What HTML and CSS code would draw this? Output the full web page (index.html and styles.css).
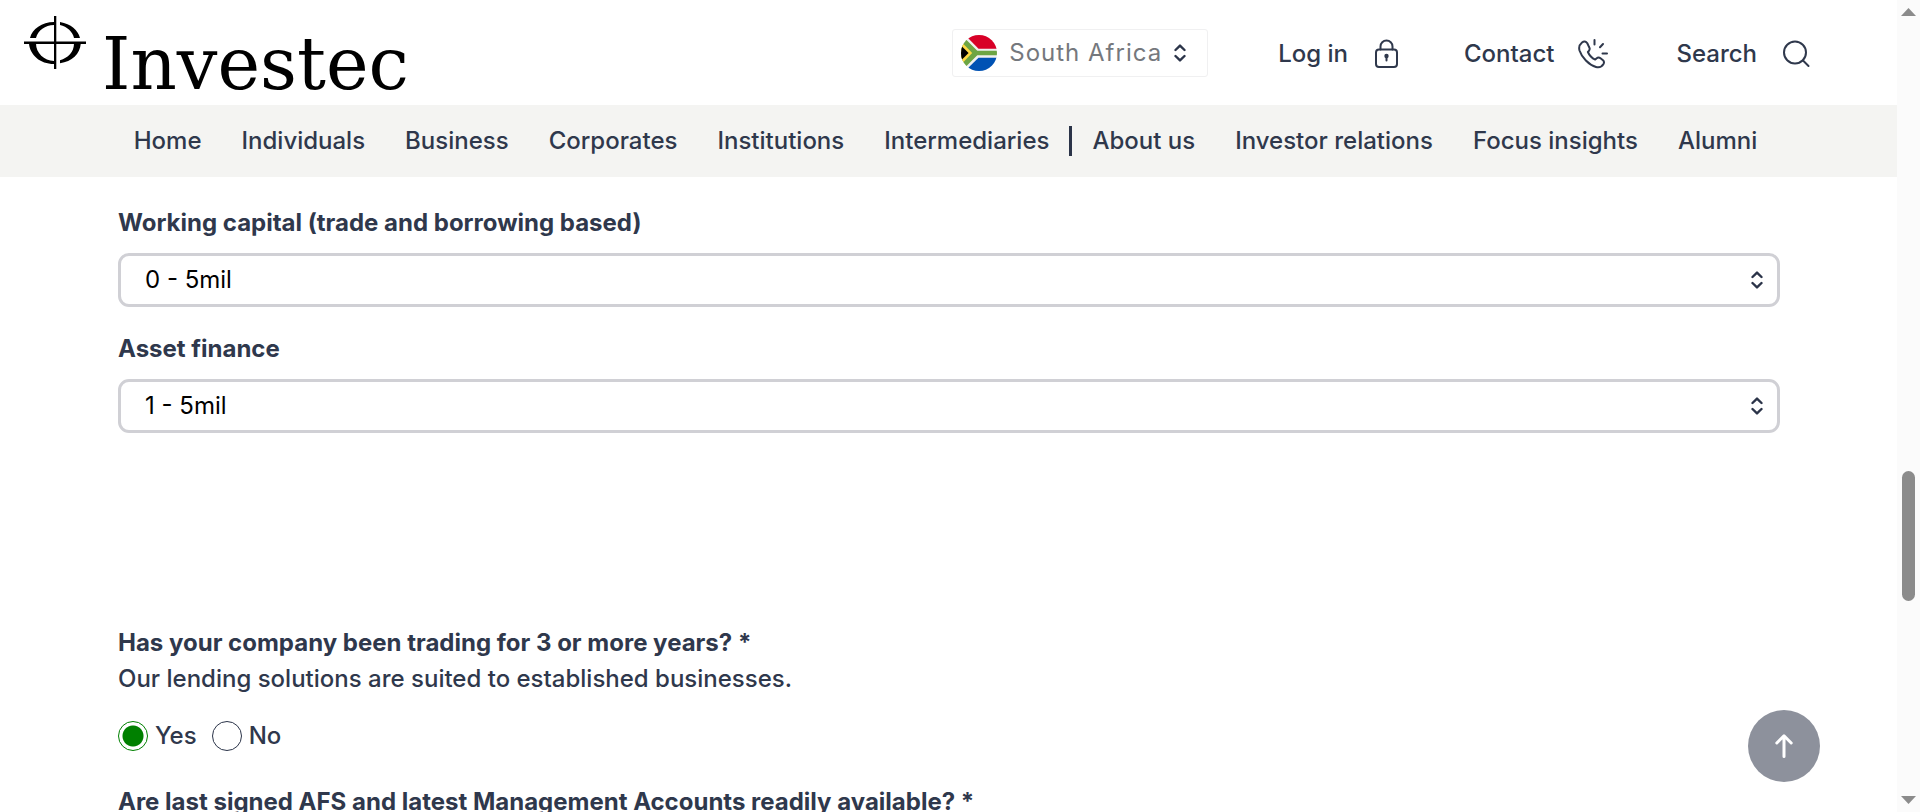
FILE: index.html
```html
<!DOCTYPE html>
<html lang="en">
<head>
<meta charset="utf-8">
<title>Investec</title>
<link rel="stylesheet" href="styles.css">
</head>
<body>
<svg class="defs" aria-hidden="true">
  <symbol id="updown" viewBox="0 0 12 18"><path d="M1.5 6 6 1.6 10.500 6M1.500 12 6 16.400 10.500 12" fill="none" stroke="#2b3449" stroke-width="2.400" stroke-linecap="round" stroke-linejoin="round"/></symbol>
</svg>
<div class="page">
  <header class="header">
    <a class="brand" href="#">
      <svg class="mark" viewBox="24 16 62 53" aria-hidden="true">
        <path d="M54 16h2.300v53H54zM24 41.500h62V44H24z"/>
        <path d="M30 38C32 29 42 22 54 22v3C45 25.500 38 30 36 38zM60 22c11 2 18 8 20 16h-6c-1-6-7-11.500-14-13zM29 43.500h7C36 53 44 60.500 54 61v3C40 64 30 55 29 43.500zM74 43.500h6.800C80 54 72 61.500 60 63.200v-3C68 58 74 52 74 43.500z"/>
      </svg>
      <span class="wordmark">Investec</span>
    </a>
    <div class="tools">
      <button class="country" type="button">
        <svg class="flag" viewBox="0 0 36 36" aria-hidden="true">
          <clipPath id="disc"><circle cx="18" cy="18" r="18"/></clipPath>
          <g clip-path="url(#disc)">
            <path fill="#f0f0f0" d="M0 0h36v36H0z"/>
            <path fill="#d80027" d="M6 0h30v13.700H17.500L5 1z"/>
            <path fill="#0052b4" d="M6 36h30V22.700H17.500L5 35z"/>
            <path fill="#6da544" d="M36 15.800V20.300H16.300L4 32.600 0 29V7L4 3.500 16.300 15.800z"/>
            <path fill="#ffda44" d="M0 6.500 11.200 18 0 29.500z"/>
            <path fill="#000" d="M0 10.500 7.600 18 0 25.500z"/>
          </g>
        </svg>
        <span class="country-name">South Africa</span>
        <svg class="updown" aria-hidden="true"><use href="#updown"/></svg>
      </button>
      <a class="tool" href="#">Log in
        <svg class="icon" viewBox="0 0 30 30" aria-hidden="true"><rect x="4" y="10.500" width="21" height="17.500" rx="3"/><path d="M8.500 10.500V7.500a6 6 0 0 1 12 0v3"/><circle class="solid" cx="14.500" cy="17" r="1.200"/><path d="M14.500 17v4.500"/></svg>
      </a>
      <a class="tool" href="#">Contact
        <svg class="icon" viewBox="0 0 30 30" aria-hidden="true"><path d="M4 3.500C1 6 .8 9 1.500 11.500 3.500 18 11 26 18 28c3 .8 6-.5 7.500-3 .8-1.500.5-2.800-.5-3.700l-2.500-2c-1.300-1-2.700-1-3.800 0l-1.500 1.300c-3-1.300-6-4.600-7.300-7.600l1-1.200c1-1.200 1-2.500.2-3.700L9.300 4.300C8 2.300 6 2 4 3.500zM16.500 1v4.500M25 5l-3 3.200M29 14.500h-4.500"/></svg>
      </a>
      <a class="tool" href="#">Search
        <svg class="icon" viewBox="0 0 30 30" aria-hidden="true"><circle cx="14" cy="13.500" r="11"/><path d="m22 21.500 5.500 5.500"/></svg>
      </a>
    </div>
  </header>
  <nav class="nav">
    <a href="#">Home</a>
    <a href="#">Individuals</a>
    <a href="#">Business</a>
    <a href="#">Corporates</a>
    <a href="#">Institutions</a>
    <a href="#">Intermediaries</a>
    <span class="divider"></span>
    <a href="#">About us</a>
    <a href="#">Investor relations</a>
    <a href="#">Focus insights</a>
    <a href="#">Alumni</a>
  </nav>
  <main class="main">
    <form class="form">
      <div class="field">
        <label for="capital">Working capital (trade and borrowing based)</label>
        <div class="select-box">
          <select id="capital"><option>0 - 5mil</option></select>
          <svg class="updown" aria-hidden="true"><use href="#updown"/></svg>
        </div>
      </div>
      <div class="field">
        <label for="asset">Asset finance</label>
        <div class="select-box">
          <select id="asset"><option>1 - 5mil</option></select>
          <svg class="updown" aria-hidden="true"><use href="#updown"/></svg>
        </div>
      </div>
      <fieldset class="question spaced">
        <legend>Has your company been trading for 3 or more years? *</legend>
        <p>Our lending solutions are suited to established businesses.</p>
        <div class="choices">
          <label class="choice"><input type="radio" name="trading" checked>Yes</label>
          <label class="choice"><input type="radio" name="trading">No</label>
        </div>
      </fieldset>
      <fieldset class="question">
        <legend>Are last signed AFS and latest Management Accounts readily available? *</legend>
      </fieldset>
    </form>
  </main>
</div>
<div class="scrollbar" aria-hidden="true">
  <svg class="arrow" viewBox="0 0 15 8"><path d="M0 8 7.500 0 15 8z"/></svg>
  <div class="track"><div class="thumb"></div></div>
  <svg class="arrow" viewBox="0 0 15 8"><path d="M0 0h15L7.500 8z"/></svg>
</div>
<button class="to-top" type="button" aria-label="Back to top">
  <svg viewBox="0 0 18 24" aria-hidden="true"><path d="M9 22.500V2M1.800 9 9 1.800 16.200 9"/></svg>
</button>
</body>
</html>
```
FILE: styles.css
```css
* { box-sizing: border-box; }

body {
  margin: 0;
  height: 100vh;
  display: flex;
  overflow: hidden;
  background: #fff;
  color: #2f384c;
  font: 24px/36px Inter, "Liberation Sans", sans-serif;
}

a { color: inherit; text-decoration: none; }
button, select { font: inherit; }
.defs { position: absolute; width: 0; height: 0; }
.page { flex: 1; min-width: 0; overflow: hidden; }

.header {
  display: flex;
  justify-content: space-between;
  height: 105px;
  padding: 16px 86px 0 24px;
}
.brand { display: flex; gap: 16px; color: #000; }
.mark { width: 62px; height: 53px; }
.wordmark { font: 72px/96px "DejaVu Serif", serif; }

.tools { display: flex; align-items: flex-start; padding-top: 13px; }
.country {
  display: flex;
  align-items: center;
  height: 48px;
  margin-right: 70px;
  padding: 0 21px 0 8px;
  border: 1px solid #f0f0f1;
  border-radius: 3px;
  background: #fff;
  color: #75787d;
}
.flag { width: 36px; height: 36px; margin-right: 12px; }
.country-name { letter-spacing: 1px; margin-right: 12px; }
.updown { width: 12px; height: 18px; flex: none; }
.tool { display: flex; align-items: center; gap: 24px; height: 50px; font-weight: 500; }
.tool + .tool { margin-left: 62px; }
.tool:last-child { margin-left: 68px; }
.icon {
  width: 30px;
  height: 30px;
  fill: none;
  stroke: #2f384c;
  stroke-width: 2;
  stroke-linecap: round;
  stroke-linejoin: round;
}
.icon .solid { fill: #2f384c; }

.nav {
  display: flex;
  align-items: center;
  justify-content: center;
  height: 72px;
  padding-right: 6px;
  background: #f4f4f2;
  font-weight: 500;
}
.nav a { padding: 0 20px; white-space: nowrap; }
.divider { width: 3px; height: 30px; background: #2b3449; }

.main { padding: 28px 117px 0 118px; }
.field { margin-bottom: 24px; }
.field > label { display: block; margin-bottom: 12px; font-weight: 700; }
.select-box { display: grid; align-items: center; }
.select-box > * { grid-area: 1 / 1; }
.select-box select {
  appearance: none;
  width: 100%;
  height: 54px;
  padding: 0 40px 0 24px;
  border: 3px solid #d0d0d5;
  border-radius: 11px;
  background: #fff;
  color: #000;
}
.select-box .updown { justify-self: end; margin-right: 17px; pointer-events: none; }

.question { margin: 0 0 33px; padding: 0; border: 0; }
.question.spaced { margin-top: 192px; }
.question legend { padding: 0; font-weight: 700; }
.question p { margin: 0 0 24px; font-weight: 500; }
.choices { display: flex; gap: 15px; }
.choice { display: flex; align-items: center; gap: 7px; height: 30px; font-weight: 500; }
.choice input {
  appearance: none;
  width: 30px;
  height: 30px;
  margin: 0;
  border: 1px solid #2b3449;
  border-radius: 50%;
}
.choice input:checked {
  border-color: #008000;
  background: radial-gradient(circle, #008000 10px, #fff 11px);
}

.scrollbar {
  display: flex;
  flex-direction: column;
  align-items: center;
  width: 23px;
  padding: 8px 0;
  background: #fbfbfb;
}
.arrow { width: 15px; height: 8px; fill: #8b8b8b; }
.track { flex: 1; display: flex; padding-top: 455px; }
.thumb { width: 13px; height: 130px; border-radius: 7px; background: #8b8b8b; }

.to-top {
  position: fixed;
  right: 100px;
  bottom: 30px;
  display: grid;
  place-items: center;
  width: 72px;
  height: 72px;
  padding: 0;
  border: 0;
  border-radius: 50%;
  background: #8d919c;
}
.to-top svg {
  width: 18px;
  height: 24px;
  fill: none;
  stroke: #fff;
  stroke-width: 3;
  stroke-linecap: round;
  stroke-linejoin: round;
}
```
